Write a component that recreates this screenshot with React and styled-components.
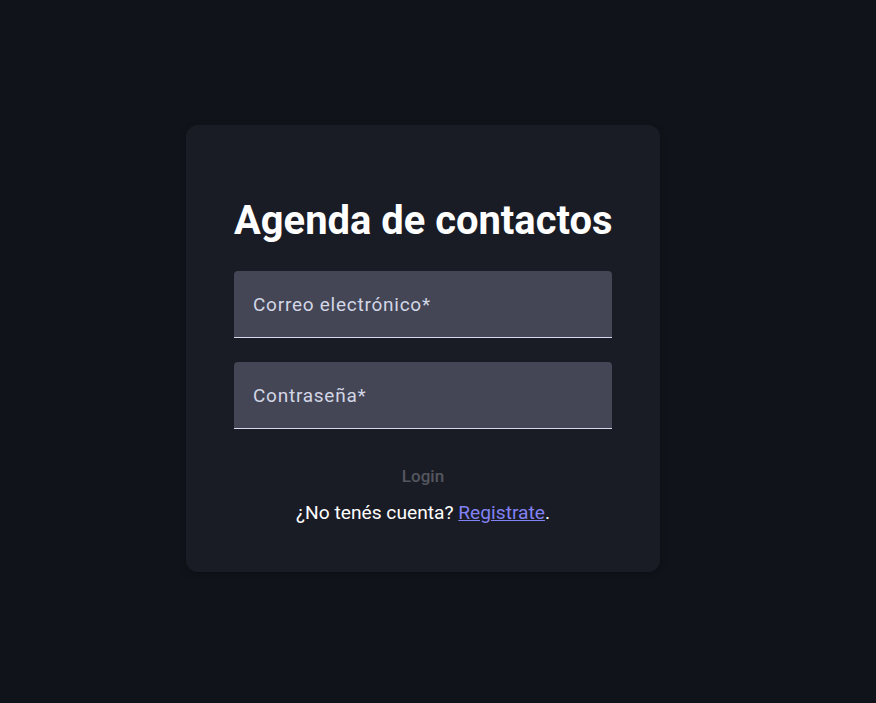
import styled, { createGlobalStyle } from 'styled-components'

const GlobalStyle = createGlobalStyle`
    html, body {
        margin: 0;
        padding: 0;
        background-color: #11131b;
        font-family: Roboto, "Liberation Sans", sans-serif;
    }
    * {
        box-sizing: border-box;
    }
`

const Page = styled.main`
    min-height: 100vh;
    display: flex;
    align-items: center;
    justify-content: center;
    padding: 0 30px 6px 0;
`

const Card = styled.section`
    width: 474px;
    display: flex;
    flex-direction: column;
    padding: 72px 48px 46px;
    background-color: #1a1c25;
    border-radius: 12px;
    box-shadow: 0 2px 6px rgba(0, 0, 0, 0.25);
`

const Title = styled.h1`
    margin: 0;
    font-size: 39.9px;
    line-height: 48px;
    font-weight: 700;
    color: #ffffff;
    white-space: nowrap;
`

const Form = styled.form`
    display: flex;
    flex-direction: column;
    gap: 24px;
    margin-top: 26px;
`

const Field = styled.label`
    display: flex;
    align-items: center;
    height: 67px;
    padding: 0 19px;
    background-color: #444655;
    border-radius: 4px 4px 0 0;
    border-bottom: 1px solid #d6d9ec;
`

const Input = styled.input`
    width: 100%;
    border: none;
    outline: none;
    background: transparent;
    padding: 0;
    margin-top: 1px;
    font-family: inherit;
    font-size: 19px;
    letter-spacing: 0.75px;
    color: #e4e6f2;

    &::placeholder {
        color: #d3d6e6;
        opacity: 1;
    }
`

const LoginButton = styled.button`
    align-self: center;
    height: 36px;
    margin-top: 5px;
    padding: 0 16px;
    border: none;
    background: transparent;
    font-family: inherit;
    font-size: 17px;
    font-weight: 500;
    color: #54565f;
    cursor: default;
`

const Footer = styled.p`
    margin: 5px 0 0;
    text-align: center;
    font-size: 19.2px;
    line-height: 27px;
    color: #ffffff;
`

const Link = styled.a`
    color: #8282f5;
    text-decoration: underline;
`

function App() {
    return (
        <>
            <GlobalStyle />
            <Page>
                <Card>
                    <Title>Agenda de contactos</Title>
                    <Form onSubmit={(e) => e.preventDefault()}>
                        <Field>
                            <Input type='email' placeholder='Correo electrónico*' />
                        </Field>
                        <Field>
                            <Input type='password' placeholder='Contraseña*' />
                        </Field>
                        <LoginButton type='submit' disabled>
                            Login
                        </LoginButton>
                    </Form>
                    <Footer>
                        ¿No tenés cuenta? <Link href='#'>Registrate</Link>.
                    </Footer>
                </Card>
            </Page>
        </>
    )
}

export default App
